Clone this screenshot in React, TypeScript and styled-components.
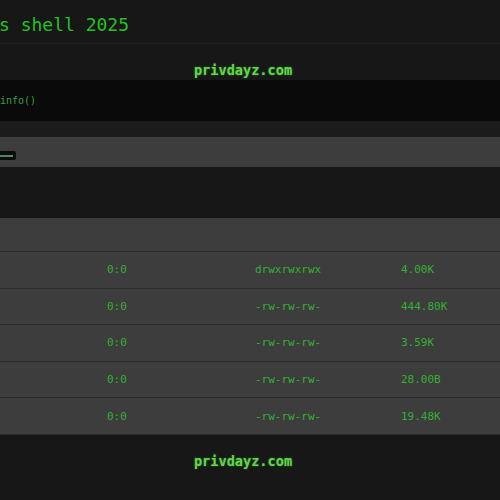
import React, { FC } from "react";
import styled, { createGlobalStyle } from "styled-components";

const Global = createGlobalStyle`
  html, body {
    margin: 0;
    padding: 0;
    background: #171717;
    overflow: hidden;
  }
  * { box-sizing: border-box; }
`;

const mono = `"DejaVu Sans Mono", "Liberation Mono", monospace`;

const Page = styled.div`
  width: 500px;
  height: 500px;
  display: flex;
  flex-direction: column;
  background: #171717;
  font-family: ${mono};
  overflow: hidden;
`;

const TitleBar = styled.div`
  height: 44px;
  padding-top: 14px;
  border-bottom: 1px solid #1d271d;
  overflow: hidden;
`;

const Title = styled.h1`
  margin: 0 0 0 -1px;
  font-size: 18px;
  font-weight: normal;
  line-height: 22px;
  color: #22c322;
  white-space: nowrap;
`;

const Brand = styled.div<{ $h: number; $pb: number }>`
  height: ${(p) => p.$h}px;
  display: flex;
  align-items: flex-end;
  justify-content: center;
  padding-right: 14px;
  padding-bottom: ${(p) => p.$pb}px;
  font-size: 13.6px;
  line-height: 16px;
  font-weight: bold;
  color: #62d64a;
  text-shadow: 0 0 2px rgba(70, 220, 70, 0.55);
`;

const InfoBar = styled.div`
  height: 41px;
  background: #0a0a0a;
  display: flex;
  align-items: center;
  font-size: 10px;
  color: #3e9e3e;
`;

const Strip = styled.div<{ $h: number; $bg: string }>`
  height: ${(p) => p.$h}px;
  background: ${(p) => p.$bg};
  display: flex;
  align-items: center;
`;

const InputStub = styled.div`
  width: 16px;
  height: 9px;
  background: #0c0c0c;
  border-radius: 0 2px 2px 0;
  display: flex;
  align-items: center;
  padding-right: 3px;
  margin-top: 7px;
  &::after {
    content: "";
    flex: 1;
    height: 2px;
    background: #4f8a5a;
  }
`;

const Table = styled.div`
  display: flex;
  flex-direction: column;
  background: #3d3d3d;
`;

const HeadRow = styled.div`
  height: 34px;
  border-bottom: 1px solid #2a2a2a;
`;

const Row = styled.div`
  height: 36.6px;
  border-bottom: 1px solid #2a2a2a;
  display: grid;
  grid-template-columns: 107px 148px 146px 1fr;
  align-items: center;
  font-size: 11px;
  color: #33b033;
`;

const Cell = styled.span`
  white-space: nowrap;
`;

const files = [
  { owner: "0:0", perms: "drwxrwxrwx", size: "4.00K" },
  { owner: "0:0", perms: "-rw-rw-rw-", size: "444.80K" },
  { owner: "0:0", perms: "-rw-rw-rw-", size: "3.59K" },
  { owner: "0:0", perms: "-rw-rw-rw-", size: "28.00B" },
  { owner: "0:0", perms: "-rw-rw-rw-", size: "19.48K" },
];

const App: FC = () => (
  <>
    <Global />
    <Page>
      <TitleBar>
        <Title>s shell 2025</Title>
      </TitleBar>
      <Brand $h={36} $pb={2}>privdayz.com</Brand>
      <InfoBar>info()</InfoBar>
      <Strip $h={16} $bg="#1b1b1b" />
      <Strip $h={30} $bg="#3d3d3d">
        <InputStub />
      </Strip>
      <Strip $h={51} $bg="#171717" />
      <Table>
        <HeadRow />
        {files.map((f, i) => (
          <Row key={i}>
            <span />
            <Cell>{f.owner}</Cell>
            <Cell>{f.perms}</Cell>
            <Cell>{f.size}</Cell>
          </Row>
        ))}
      </Table>
      <Brand $h={34} $pb={0}>privdayz.com</Brand>
    </Page>
  </>
);

export default App;
